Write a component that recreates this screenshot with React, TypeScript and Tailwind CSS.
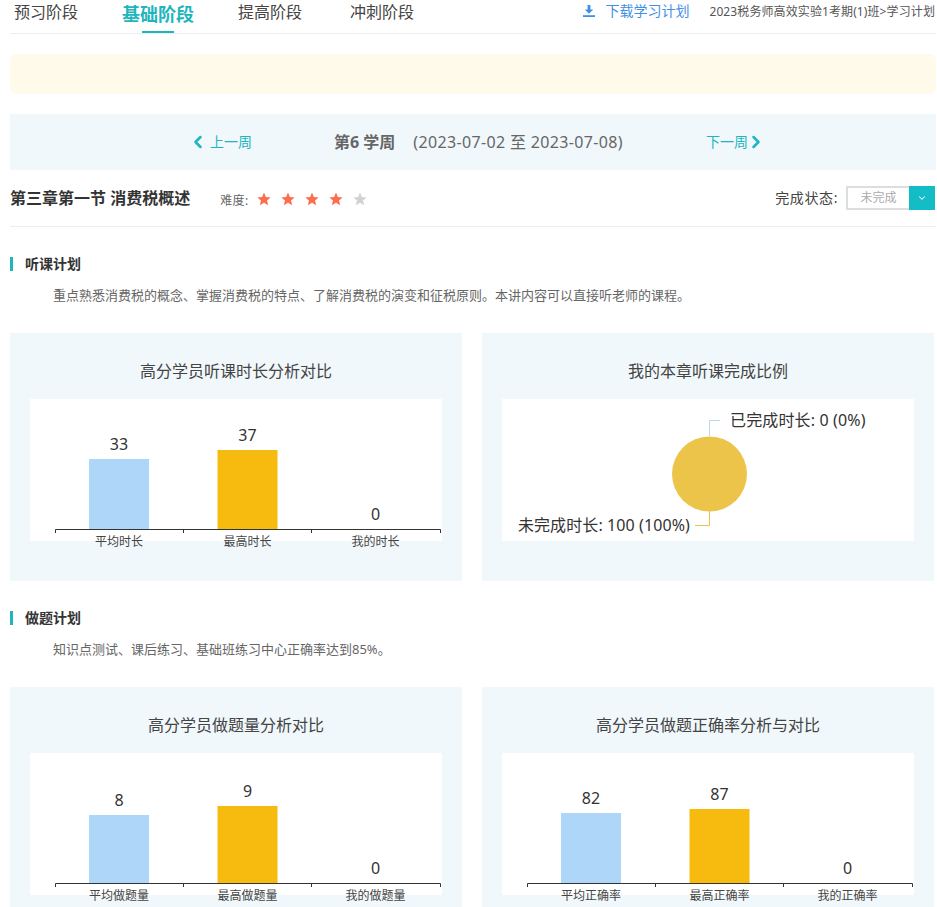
import React from 'react';
import { ChevronDown, ChevronLeft, ChevronRight } from 'lucide-react';

const font = 'font-["Noto_Sans","Noto_Sans_CJK_SC",sans-serif]';

const Star: React.FC<{ on: boolean }> = ({ on }) => (
    <svg width="14" height="14" viewBox="0 0 24 24" className={on ? 'fill-[#fb6e4e]' : 'fill-[#d2d2d2]'}>
        <path d="M12 1l3.2 7.6 8.3.7-6.3 5.4 1.9 8.1L12 18.5l-7.1 4.3 1.9-8.1L.5 9.3l8.3-.7z" />
    </svg>
);

const DownloadIcon = () => (
    <svg width="12" height="12" viewBox="0 0 12 12" className="fill-[#3f8fe6] -mt-[1px]">
        <path d="M4.6 0h2.8v4.4h2.8L6 8.8 1.8 4.4h2.8z" />
        <rect x="0" y="10.2" width="12" height="1.8" />
    </svg>
);

const SectionTitle: React.FC<{ title: string; text: string }> = ({ title, text }) => (
    <div>
        <div className="flex items-center h-[14px]">
            <div className="w-[3px] h-[14px] bg-[#1fb5bd]"></div>
            <div className="ml-3 text-sm font-bold text-[#333]">{title}</div>
        </div>
        <p className="pl-[43px] mt-4 text-[13px] leading-[16px] text-[#666]">{text}</p>
    </div>
);

interface BarItem {
    label: string;
    value: number;
    top: number;
}

// same layout as the chart canvas: axis at y=130, three bands of 128.3px
const BarChart: React.FC<{ items: BarItem[] }> = ({ items }) => {
    const colors = ['#aed6f8', '#f6bb0e', '#aed6f8'];
    const centers = [89, 217.5, 345.5];
    return (
        <svg width="412" height="142" className="overflow-visible block">
            {items.map((item, i) => (
                <g key={item.label}>
                    {item.value > 0 && <rect x={centers[i] - 30} y={item.top} width="60" height={130 - item.top} fill={colors[i]} />}
                    <text x={centers[i]} y={item.top - 9} textAnchor="middle" fontSize="16" fill="#333">{item.value}</text>
                    <text x={centers[i]} y={147} textAnchor="middle" fontSize="12" fill="#444">{item.label}</text>
                </g>
            ))}
            <path d="M25.5 134V130.5H410.5V134M153.5 130.5V134M281.5 130.5V134" fill="none" stroke="#333" strokeWidth="1" />
        </svg>
    );
};

const PieChart = () => (
    <svg width="412" height="142" className="overflow-visible block">
        <circle cx="207.5" cy="75" r="37.5" fill="#edc44a" />
        <path d="M207.5 37V21.5H218" fill="none" stroke="#b9d8ee" strokeWidth="1" />
        <path d="M207.5 112V126.5H193" fill="none" stroke="#eec14a" strokeWidth="1" />
        <text x="228" y="27" fontSize="16" fill="#333" className="tracking-[0.15px]">已完成时长: 0 (0%)</text>
        <text x="188" y="132" textAnchor="end" fontSize="16" fill="#333" className="tracking-[0.1px]">未完成时长: 100 (100%)</text>
    </svg>
);

const ChartCard: React.FC<{ title: string; children: React.ReactNode }> = ({ title, children }) => (
    <div className="w-[452px] h-[248px] bg-[#f1f8fb] px-5 pt-[26px]">
        <h3 className="text-base leading-[24px] text-center text-[#444] mb-4">{title}</h3>
        <div className="bg-white h-[142px]">{children}</div>
    </div>
);

export default function App() {
    return (
        <div className={`${font} h-[907px] w-[937px] overflow-hidden bg-white pl-[10px]`}>
            {/* Header */}
            <div className="w-[926px] h-[34px] border-b border-[#ebeef0] flex items-start justify-between">
                <div className="flex items-start pl-1 text-base leading-[24px] text-[#444]">
                    <span>预习阶段</span>
                    <span className="relative ml-11 h-[33px] text-lg font-bold text-[#1fb5bd]">
                        基础阶段
                        <span className="absolute left-5 bottom-0 w-8 h-[2px] bg-[#1fb5bd]"></span>
                    </span>
                    <span className="ml-11">提高阶段</span>
                    <span className="ml-12">冲刺阶段</span>
                </div>
                <div className="flex items-center h-[22px] pr-[1px]">
                    <DownloadIcon />
                    <span className="ml-[10px] text-sm text-[#3f8fe6]">下载学习计划</span>
                    <span className="ml-5 mt-[1px] text-xs tracking-[0.1px] text-[#555]">2023税务师高效实验1考期(1)班&gt;学习计划</span>
                </div>
            </div>

            <div className="w-[926px] h-10 mt-5 rounded-md bg-[#fffaea]"></div>

            {/* Week switch */}
            <div className="w-[926px] h-14 mt-5 bg-[#f1f8fb] flex items-center pl-[178px]">
                <div className="flex items-center text-sm text-[#1fb5bd] w-[146px]">
                    <ChevronLeft size={20} strokeWidth={3} />
                    <span className="ml-[2px]">上一周</span>
                </div>
                <div className="flex items-center text-base text-[#666] w-[372px]">
                    <span className="font-bold">第6 学周</span>
                    <span className="ml-[18px] tracking-[0.35px]">(2023-07-02 至 2023-07-08)</span>
                </div>
                <div className="flex items-center text-sm text-[#1fb5bd]">
                    <span>下一周</span>
                    <ChevronRight size={20} strokeWidth={3} className="-ml-[2px]" />
                </div>
            </div>

            {/* Chapter row */}
            <div className="w-[926px] h-[57px] border-b border-[#ebeef0] flex items-center">
                <h2 className="text-base font-bold text-[#333]">第三章第一节 消费税概述</h2>
                <div className="ml-[30px] mt-[6px] text-xs tracking-[0.4px] text-[#666]">难度:</div>
                <div className="ml-[8px] mt-[2px] flex gap-[10px]">
                    {[true, true, true, true, false].map((on, i) => (
                        <Star key={i} on={on} />
                    ))}
                </div>
                <div className="ml-auto pr-[1px] flex items-center">
                    <span className="text-sm tracking-[0.6px] text-[#444] mr-2">完成状态:</span>
                    <div className="flex h-6 w-[89px] border-2 border-r-0 border-[#ddd] bg-white">
                        <span className="flex-1 text-center text-xs leading-[20px] text-[#aaa]">未完成</span>
                        <span className="-my-[2px] w-[26px] bg-[#14bcc6] flex items-center justify-center text-white">
                            <ChevronDown size={10} strokeWidth={2.5} />
                        </span>
                    </div>
                </div>
            </div>

            <div className="mt-[30px]">
                <SectionTitle title="听课计划" text="重点熟悉消费税的概念、掌握消费税的特点、了解消费税的演变和征税原则。本讲内容可以直接听老师的课程。" />
            </div>
            <div className="flex gap-5 mt-[30px]">
                <ChartCard title="高分学员听课时长分析对比">
                    <BarChart
                        items={[
                            { label: '平均时长', value: 33, top: 60 },
                            { label: '最高时长', value: 37, top: 51 },
                            { label: '我的时长', value: 0, top: 130 },
                        ]}
                    />
                </ChartCard>
                <ChartCard title="我的本章听课完成比例">
                    <PieChart />
                </ChartCard>
            </div>

            <div className="mt-[30px]">
                <SectionTitle title="做题计划" text="知识点测试、课后练习、基础班练习中心正确率达到85%。" />
            </div>
            <div className="flex gap-5 mt-[30px]">
                <ChartCard title="高分学员做题量分析对比">
                    <BarChart
                        items={[
                            { label: '平均做题量', value: 8, top: 62 },
                            { label: '最高做题量', value: 9, top: 53 },
                            { label: '我的做题量', value: 0, top: 130 },
                        ]}
                    />
                </ChartCard>
                <ChartCard title="高分学员做题正确率分析与对比">
                    <BarChart
                        items={[
                            { label: '平均正确率', value: 82, top: 60 },
                            { label: '最高正确率', value: 87, top: 56 },
                            { label: '我的正确率', value: 0, top: 130 },
                        ]}
                    />
                </ChartCard>
            </div>
        </div>
    );
}
